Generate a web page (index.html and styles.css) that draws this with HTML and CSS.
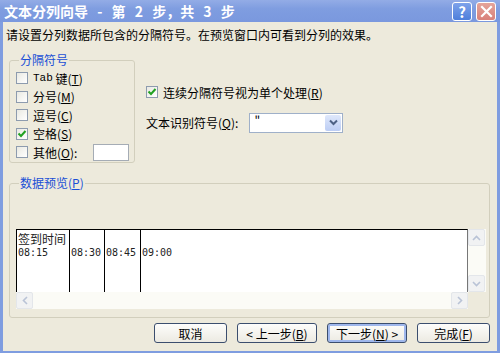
FILE: index.html
```html
<!DOCTYPE html>
<html lang="zh-CN">
<head>
    <meta charset="UTF-8">
    <title>文本分列向导 - 第 2 步，共 3 步</title>
    <link rel="stylesheet" href="styles.css">
</head>
<body>
    <div class="window">
        <div class="titlebar">
            <span class="title">文本分列向导 - 第 2 步，共 3 步</span>
            <div class="title-btns">
                <span class="tbtn help">?</span>
                <span class="tbtn close">
                    <svg width="13" height="13" viewBox="0 0 13 13"><path d="M2 2 L11 11 M11 2 L2 11" stroke="#fff" stroke-width="2.2" stroke-linecap="square"/></svg>
                </span>
            </div>
        </div>

        <div class="content">
            <p class="intro">请设置分列数据所包含的分隔符号。在预览窗口内可看到分列的效果。</p>

            <div class="upper">
                <fieldset class="group delims">
                    <legend>分隔符号</legend>
                    <label class="check"><span class="box"></span><span class="mono">Tab</span>&nbsp;键(<u>T</u>)</label>
                    <label class="check"><span class="box"></span>分号(<u>M</u>)</label>
                    <label class="check"><span class="box"></span>逗号(<u>C</u>)</label>
                    <label class="check"><span class="box checked"><svg width="10" height="10" viewBox="0 0 10 10"><path d="M1.5 4.5 L4 7 L8.5 2" fill="none" stroke="#21a121" stroke-width="2"/></svg></span>空格(<u>S</u>)</label>
                    <label class="check other"><span class="box"></span>其他(<u>O</u>):<span class="textbox"></span></label>
                </fieldset>

                <div class="options">
                    <label class="check"><span class="box checked"><svg width="10" height="10" viewBox="0 0 10 10"><path d="M1.5 4.5 L4 7 L8.5 2" fill="none" stroke="#21a121" stroke-width="2"/></svg></span>连续分隔符号视为单个处理(<u>R</u>)</label>
                    <div class="qualifier">
                        <span>文本识别符号(<u>Q</u>):</span>
                        <div class="combo">
                            <span class="combo-val">"</span>
                            <span class="combo-btn">
                                <svg width="9" height="7" viewBox="0 0 9 7"><path d="M1 1.5 L4.5 5 L8 1.5" fill="none" stroke="#4d6185" stroke-width="2"/></svg>
                            </span>
                        </div>
                    </div>
                </div>
            </div>

            <fieldset class="group preview">
                <legend>数据预览(<u>P</u>)</legend>
                <div class="grid-wrap">
                    <div class="grid">
                        <div class="col c1"><span class="head">签到时间</span><span>08:15</span></div>
                        <div class="col c2"><span class="head"></span><span>08:30</span></div>
                        <div class="col c3"><span class="head"></span><span>08:45</span></div>
                        <div class="col c4"><span class="head"></span><span>09:00</span></div>
                    </div>
                    <div class="vscroll">
                        <span class="sbtn"><svg width="9" height="6" viewBox="0 0 9 6"><path d="M1 5 L4.5 1.5 L8 5" fill="none" stroke="#b9c3d6" stroke-width="1.6"/></svg></span>
                        <span class="sbtn"><svg width="9" height="6" viewBox="0 0 9 6"><path d="M1 1 L4.5 4.5 L8 1" fill="none" stroke="#b9c3d6" stroke-width="1.6"/></svg></span>
                    </div>
                    <div class="hscroll">
                        <span class="sbtn"><svg width="6" height="9" viewBox="0 0 6 9"><path d="M5 1 L1.5 4.5 L5 8" fill="none" stroke="#b9c3d6" stroke-width="1.6"/></svg></span>
                        <span class="sbtn"><svg width="6" height="9" viewBox="0 0 6 9"><path d="M1 1 L4.5 4.5 L1 8" fill="none" stroke="#b9c3d6" stroke-width="1.6"/></svg></span>
                    </div>
                </div>
            </fieldset>

            <div class="buttons">
                <button class="btn">取消</button>
                <button class="btn wide">&lt; 上一步(<u>B</u>)</button>
                <button class="btn wide focus">下一步(<u>N</u>) &gt;</button>
                <button class="btn">完成(<u>F</u>)</button>
            </div>
        </div>
    </div>
</body>
</html>
```

FILE: styles.css
```css
* {
    margin: 0;
    padding: 0;
    box-sizing: border-box;
}

body {
    font-family: "Noto Sans CJK SC", "Liberation Sans", sans-serif;
    font-size: 12px;
    color: #000;
    background: #7f9de0;
}

u {
    text-decoration: underline;
}

.window {
    width: 500px;
    height: 353px;
    background: #edeadc;
    border-left: 3px solid #7f9de0;
    border-right: 3px solid #7f9de0;
    border-bottom: 2px solid #7f9de0;
    display: flex;
    flex-direction: column;
}

.titlebar {
    height: 22px;
    margin: 0 -3px;
    padding: 0 4px 0 4px;
    background: linear-gradient(#93ace6, #7f9de0 40%, #7a98de);
    display: flex;
    align-items: center;
    justify-content: space-between;
}

.title {
    color: #fff;
    font-size: 14px;
    font-weight: bold;
    word-spacing: 6px;
    line-height: 22px;
}

.title-btns {
    display: flex;
    gap: 4px;
}

.tbtn {
    width: 20px;
    height: 19px;
    border: 1px solid #fff;
    border-radius: 3px;
    display: flex;
    align-items: center;
    justify-content: center;
    color: #fff;
    font-weight: bold;
    font-size: 15px;
}

.help {
    background: linear-gradient(#7ea2ea, #4e7fdb);
}

.close {
    background: linear-gradient(#e4a49a, #d9817a);
}

.content {
    flex: 1;
    padding: 0 7px 0 6px;
    display: flex;
    flex-direction: column;
}

.intro {
    margin: 4px 0 0 -3px;
    line-height: 18px;
    height: 18px;
    white-space: nowrap;
}

.upper {
    display: flex;
    margin-top: 9px;
}

.group {
    border: 1px solid #d2cfbd;
    border-radius: 3px;
}

.group legend {
    color: #1a4fd6;
    padding: 0 1px;
    margin-left: 3px;
    line-height: 14px;
}

.delims {
    width: 126px;
    height: 110px;
    padding: 2px 0 0 6px;
    display: flex;
    flex-direction: column;
}

.check {
    display: flex;
    align-items: center;
    height: 18.5px;
    white-space: nowrap;
}

.box {
    width: 12px;
    height: 12px;
    border: 1px solid #8d9bae;
    background: linear-gradient(135deg, #e9e9e2, #fff);
    margin-right: 5px;
    display: flex;
    align-items: center;
    justify-content: center;
}

.mono {
    font-family: "Liberation Mono", monospace;
    font-size: 11px;
}

.textbox {
    width: 36px;
    height: 17px;
    border: 1px solid #a5acb5;
    background: #fff;
    margin-left: 16px;
}

.options {
    margin-left: 11px;
    padding-top: 30px;
}

.qualifier {
    display: flex;
    align-items: center;
    margin-top: 11px;
}

.combo {
    width: 94px;
    height: 20px;
    margin-left: 11px;
    border: 1px solid #9fb0c9;
    background: #fff;
    display: flex;
    justify-content: space-between;
}

.combo-val {
    padding-left: 4px;
    line-height: 14px;
}

.combo-btn {
    width: 16px;
    margin: 1px;
    background: linear-gradient(#dfe8fb, #bccdf4);
    border-radius: 2px;
    display: flex;
    align-items: center;
    justify-content: center;
}

.preview {
    margin-top: 13px;
    width: 481px;
    height: 142px;
    padding: 39px 0 0 6px;
}

.grid-wrap {
    display: grid;
    grid-template-columns: 452px 18px;
    grid-template-rows: 63px 17px;
}

.grid {
    background: #fff;
    border-top: 1px solid #000;
    border-left: 1px solid #000;
    border-right: 1px solid #777;
    display: flex;
}

.col {
    display: flex;
    flex-direction: column;
    padding-left: 1px;
    font-family: "DejaVu Sans Mono", monospace;
    font-size: 10px;
    color: #222;
}

.col .head {
    height: 17px;
    font-family: "Noto Sans CJK SC", sans-serif;
    font-size: 12px;
    line-height: 17px;
}

.c1 { width: 53px; border-right: 1px solid #000; }
.c2 { width: 35px; border-right: 1px solid #000; }
.c3 { width: 36px; border-right: 1px solid #000; }
.c4 { flex: 1; }

.vscroll {
    background: #fbfbf6;
    display: flex;
    flex-direction: column;
    justify-content: space-between;
}

.hscroll {
    background: #fbfbf6;
    display: flex;
    justify-content: space-between;
}

.sbtn {
    width: 17px;
    height: 17px;
    background: #f1f2f3;
    border: 1px solid #e3e6ea;
    border-radius: 2px;
    display: flex;
    align-items: center;
    justify-content: center;
}

.buttons {
    display: flex;
    justify-content: flex-end;
    gap: 10px;
    margin-top: 5px;
}

.btn {
    font-family: inherit;
    font-size: 12px;
    width: 73px;
    height: 20px;
    border: 1px solid #3b4e6e;
    border-radius: 3px;
    background: linear-gradient(#fdfdfb, #eceae2);
    color: #000;
}

.btn.wide {
    width: 80px;
}

.btn.focus {
    box-shadow: inset 0 0 0 2px #9fb7ec;
}
```
